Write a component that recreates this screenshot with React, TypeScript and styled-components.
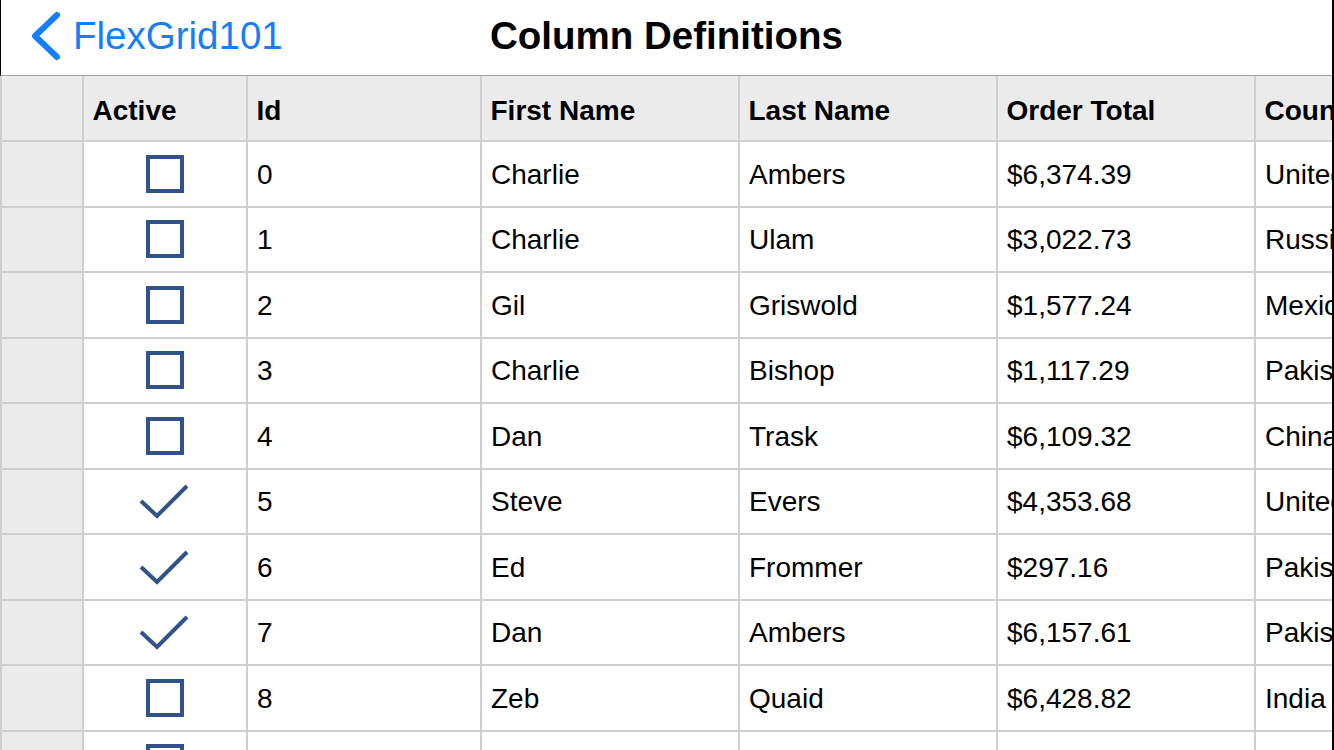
import styled, { createGlobalStyle } from "styled-components";

const GlobalStyle = createGlobalStyle`
  html, body {
    margin: 0;
    padding: 0;
    background: #ffffff;
    overflow: hidden;
  }

  body {
    font-family: "Liberation Sans", Arial, sans-serif;
  }
`;

const BLUE = "#147efb";
const CHECK = "#32528b";
const LINE = "#cfcfcf";
const HEAD_BG = "#ebebeb";

const Screen = styled.div`
  width: 1334px;
  height: 750px;
  box-sizing: border-box;
  border-right: 2px solid #000;
  overflow: hidden;
  display: flex;
  flex-direction: column;
`;

const NavBar = styled.header`
  height: 75px;
  flex: none;
  display: grid;
  grid-template-columns: 1fr auto 1fr;
  align-items: center;
  border-left: 1px solid #000;
  border-bottom: 1px solid #a4a4a4;
  background: #fff;
`;

const BackButton = styled.div`
  display: flex;
  align-items: center;
  gap: 11px;
  padding-left: 29px;
  color: ${BLUE};
  font-size: 38.5px;
  line-height: 1;
  margin-top: -3px;
`;

const Title = styled.h1`
  margin: 0;
  font-size: 38.5px;
  font-weight: bold;
  color: #000;
  line-height: 1;
  margin-top: -2px;
`;

const Grid = styled.div`
  display: grid;
  grid-template-columns: 82px 164px 234px 258px 258px 258px 258px;
  grid-auto-rows: 65.5px;
  grid-template-rows: 66px;
  border-left: 2px solid ${LINE};
  flex: none;
`;

const Cell = styled.div<{ $head?: boolean; $center?: boolean; $gutter?: boolean }>`
  box-sizing: border-box;
  border-right: 2px solid ${LINE};
  border-bottom: 2px solid ${LINE};
  background: ${(p) => (p.$head || p.$gutter ? HEAD_BG : "#fff")};
  display: flex;
  align-items: center;
  justify-content: ${(p) => (p.$center ? "center" : "flex-start")};
  padding: ${(p) => (p.$head ? "5px 8px 0 8.5px" : p.$center ? "0" : "2px 8px 0 9px")};
  font-size: 28px;
  font-weight: ${(p) => (p.$head ? "bold" : "normal")};
  color: #000;
  white-space: nowrap;
  overflow: hidden;
`;

const Chevron = () => (
  <svg width="32" height="50" viewBox="0 0 32 50">
    <polyline
      points="27,4 5,25 27,46"
      fill="none"
      stroke={BLUE}
      strokeWidth="6"
      strokeLinecap="round"
      strokeLinejoin="round"
    />
  </svg>
);

const BoxIcon = () => (
  <svg width="38" height="38" viewBox="0 0 38 38">
    <rect x="2" y="2" width="34" height="34" fill="none" stroke={CHECK} strokeWidth="4" />
  </svg>
);

const CheckIcon = () => (
  <svg width="54" height="40" viewBox="0 0 54 40">
    <polyline points="3,20 19,35 49,5" fill="none" stroke={CHECK} strokeWidth="4" />
  </svg>
);

type Row = {
  active: boolean;
  id: number;
  first: string;
  last: string;
  total: string;
  country: string;
};

const rows: Row[] = [
  { active: false, id: 0, first: "Charlie", last: "Ambers", total: "$6,374.39", country: "United States" },
  { active: false, id: 1, first: "Charlie", last: "Ulam", total: "$3,022.73", country: "Russia" },
  { active: false, id: 2, first: "Gil", last: "Griswold", total: "$1,577.24", country: "Mexico" },
  { active: false, id: 3, first: "Charlie", last: "Bishop", total: "$1,117.29", country: "Pakistan" },
  { active: false, id: 4, first: "Dan", last: "Trask", total: "$6,109.32", country: "China" },
  { active: true, id: 5, first: "Steve", last: "Evers", total: "$4,353.68", country: "United States" },
  { active: true, id: 6, first: "Ed", last: "Frommer", total: "$297.16", country: "Pakistan" },
  { active: true, id: 7, first: "Dan", last: "Ambers", total: "$6,157.61", country: "Pakistan" },
  { active: false, id: 8, first: "Zeb", last: "Quaid", total: "$6,428.82", country: "India" },
  { active: false, id: 9, first: "Ted", last: "Neiman", total: "$2,514.07", country: "Japan" },
];

const columns = ["Active", "Id", "First Name", "Last Name", "Order Total", "Country"];

export default function App() {
  return (
    <>
      <GlobalStyle />
      <Screen>
        <NavBar>
          <BackButton>
            <Chevron />
            FlexGrid101
          </BackButton>
          <Title>Column Definitions</Title>
          <div />
        </NavBar>

        <Grid>
          <Cell $head />
          {columns.map((c) => (
            <Cell key={c} $head>
              {c}
            </Cell>
          ))}

          {rows.map((r) => (
            <>
              <Cell key={`g${r.id}`} $gutter />
              <Cell key={`a${r.id}`} $center>
                {r.active ? <CheckIcon /> : <BoxIcon />}
              </Cell>
              <Cell key={`i${r.id}`}>{r.id}</Cell>
              <Cell key={`f${r.id}`}>{r.first}</Cell>
              <Cell key={`l${r.id}`}>{r.last}</Cell>
              <Cell key={`t${r.id}`}>{r.total}</Cell>
              <Cell key={`c${r.id}`}>{r.country}</Cell>
            </>
          ))}
        </Grid>
      </Screen>
    </>
  );
}
